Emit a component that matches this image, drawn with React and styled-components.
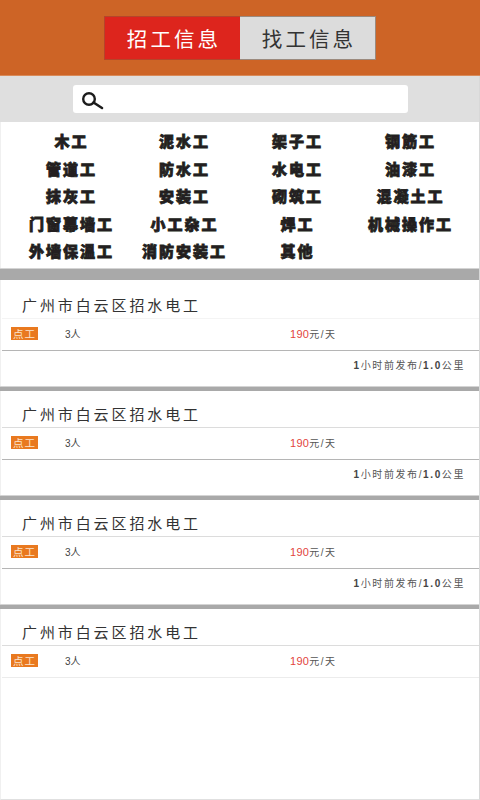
import React from "react";
import styled, { createGlobalStyle } from "styled-components";

const Global = createGlobalStyle`
  html, body { margin: 0; padding: 0; background: #fff; }
  body { font-family: "Liberation Sans", "Noto Sans CJK SC", sans-serif; }
`;

const Page = styled.div`
  width: 480px;
  height: 800px;
  box-sizing: border-box;
  background: #fff;
  border-left: 1px solid #f0f0f0;
  border-right: 1px solid #d8d8d8;
  border-bottom: 1px solid #e0e0e0;
`;

const Header = styled.header`
  height: 76px;
  margin: 0 -1px;
  background: #cd6426;
  border-bottom: 1px solid #d98a58;
  display: flex;
  justify-content: center;
  padding-top: 16px;
  box-sizing: border-box;
`;

const Tabs = styled.div`
  display: flex;
  height: 44px;
`;

const Tab = styled.div`
  width: 136px;
  display: flex;
  align-items: center;
  justify-content: center;
  font-family: "Noto Sans CJK SC", sans-serif;
  font-size: 20.5px;
  letter-spacing: 3.1px;
  padding-left: 3px;
  box-sizing: border-box;
  background: ${(p) => (p.$active ? "#dd251d" : "#dcdcdc")};
  color: ${(p) => (p.$active ? "#fff" : "#333")};
  border: 1px solid ${(p) => (p.$active ? "#b5452a" : "#9b8a7e")};
  border-right-width: ${(p) => (p.$active ? 0 : 1)}px;
  border-left-width: ${(p) => (p.$active ? 1 : 0)}px;
`;

const SearchBar = styled.div`
  height: 46px;
  margin-left: -1px;
  background: #dfdfdf;
  display: flex;
  align-items: center;
  box-sizing: border-box;
  padding-left: 73px;
`;

const SearchInput = styled.div`
  width: 335px;
  height: 28px;
  background: #fff;
  border-radius: 3px;
  display: flex;
  align-items: center;
  padding-left: 8px;
  box-sizing: border-box;
`;

const Categories = styled.div`
  display: grid;
  grid-template-columns: repeat(4, 113px);
  grid-auto-rows: 27.5px;
  padding: 5px 0 0 14px;
  height: 146px;
  box-sizing: border-box;
`;

const Category = styled.div`
  display: flex;
  align-items: center;
  justify-content: center;
  font-family: "Noto Sans CJK SC", sans-serif;
  font-weight: 900;
  font-size: 15px;
  letter-spacing: 2px;
  color: #231f20;
  -webkit-text-stroke: 0.8px #231f20;
  white-space: nowrap;
`;

const Divider = styled.div`
  height: ${(p) => p.$h}px;
  margin-left: -1px;
  background: #a9a9a9;
  border-top: 1px solid #d4d4d4;
  box-sizing: border-box;
`;

const Card = styled.section`
  height: ${(p) => p.$h}px;
  box-sizing: border-box;
`;

const Title = styled.h2`
  margin: 0 0 0 1px;
  height: ${(p) => p.$h}px;
  box-sizing: border-box;
  padding: 0 0 2px 20px;
  display: flex;
  align-items: flex-end;
  font-family: "Noto Sans CJK SC", sans-serif;
  font-size: 15px;
  font-weight: 400;
  letter-spacing: 2.9px;
  line-height: 22px;
  color: #333;
  border-bottom: 1px solid ${(p) => (p.$strong ? "#dcdcdc" : "#f4f4f4")};
`;

const Row = styled.div`
  height: 32px;
  box-sizing: border-box;
  margin-left: 1px;
  padding-bottom: 2px;
  display: flex;
  align-items: center;
  border-bottom: 1px solid ${(p) => (p.$faint ? "#ececec" : "#b5b5b5")};
`;

const Badge = styled.span`
  margin-left: 9px;
  width: 27px;
  height: 13px;
  background: #e9791f;
  color: #fbe3cc;
  font-family: "Noto Sans CJK SC", sans-serif;
  font-size: 10.5px;
  letter-spacing: 1px;
  display: flex;
  align-items: center;
  justify-content: center;
  line-height: 13px;
`;

const Count = styled.span`
  margin-left: 27px;
  width: 225px;
  font-size: 10px;
  color: #444;
`;

const Wage = styled.span`
  font-size: 10px;
  color: #555;
  letter-spacing: 1.5px;
`;

const Money = styled.span`
  font-size: 11px;
  letter-spacing: 0.3px;
  color: #e2453c;
`;

const Meta = styled.div`
  height: 26px;
  display: flex;
  align-items: center;
  justify-content: flex-end;
  padding-right: 14px;
  font-size: 10px;
  letter-spacing: 1.6px;
  color: #555;
`;

const MetaNum = styled.b`
  color: #444;
`;

function SearchIcon() {
  return (
    <svg width="24" height="24" viewBox="0 0 24 24" fill="none" stroke="#1c1c1c">
      <circle cx="8" cy="12" r="5.8" strokeWidth="2.4" />
      <path d="M12.5 15.5L21 21" strokeWidth="2.6" strokeLinecap="round" />
    </svg>
  );
}

const cats = [
  "木工", "泥水工", "架子工", "钢筋工",
  "管道工", "防水工", "水电工", "油漆工",
  "抹灰工", "安装工", "砌筑工", "混凝土工",
  "门窗幕墙工", "小工杂工", "焊工", "机械操作工",
  "外墙保温工", "消防安装工", "其他",
];

const jobs = [
  { titleH: 39, h: 106, bar: 5 },
  { titleH: 37, h: 104, bar: 5 },
  { titleH: 37, h: 104, bar: 5 },
  { titleH: 37, h: 0, bar: 0, last: true },
];

export default function App() {
  return (
    <Page>
      <Global />
      <Header>
        <Tabs>
          <Tab $active>招工信息</Tab>
          <Tab>找工信息</Tab>
        </Tabs>
      </Header>
      <SearchBar>
        <SearchInput>
          <SearchIcon />
        </SearchInput>
      </SearchBar>
      <Categories>
        {cats.map((c) => (
          <Category key={c}>{c}</Category>
        ))}
      </Categories>
      <Divider $h={12} />
      {jobs.map((j, i) => (
        <React.Fragment key={i}>
          <Card $h={j.last ? 100 : j.h}>
            <Title $h={j.titleH} $strong={i > 0}>广州市白云区招水电工</Title>
            <Row $faint={j.last}>
              <Badge>点工</Badge>
              <Count>3人</Count>
              <Wage><Money>190</Money>元/天</Wage>
            </Row>
            {!j.last && (
              <Meta>
                <span><MetaNum>1</MetaNum>小时前发布/<MetaNum>1.0</MetaNum>公里</span>
              </Meta>
            )}
          </Card>
          {j.bar > 0 && <Divider $h={j.bar} />}
        </React.Fragment>
      ))}
    </Page>
  );
}
